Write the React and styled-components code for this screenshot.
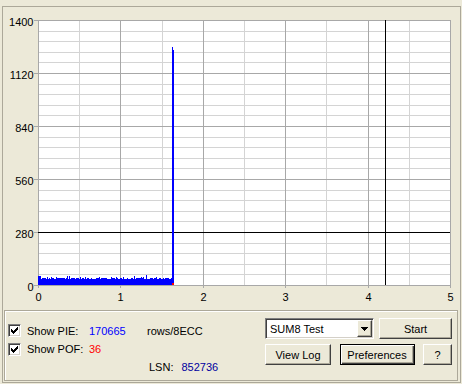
import React from "react";
import styled, { createGlobalStyle } from "styled-components";

const Global = createGlobalStyle`
  html, body { margin: 0; padding: 0; background: #ece9d8; }
  body { font-family: "Liberation Sans", Arial, sans-serif; font-size: 11px; color: #000; }
`;

const Window = styled.div`
  width: 462px;
  height: 384px;
  box-sizing: border-box;
  padding: 6px 0 0 2px;
  background: #ece9d8;
  overflow: hidden;
`;

const Frame = styled.div`
  width: 459px;
  box-sizing: border-box;
  border: 1px solid #aca899;
  padding-bottom: 1px;
  display: flex;
  flex-direction: column;
`;

const ChartSvg = styled.svg`
  display: block;
  font-family: "Liberation Sans", Arial, sans-serif;
  font-size: 11px;
`;

const Panel = styled.div`
  margin-left: 1px;
  width: 454px;
  height: 71px;
  box-sizing: border-box;
  border: 1px solid #aca899;
  box-shadow: inset 1px 1px 0 #fff;
  display: flex;
  align-items: flex-start;
  padding: 0 5px 0 3px;
`;

const Info = styled.div`
  display: grid;
  grid-template-columns: 19px 62px 58px auto;
  grid-template-rows: 19px 18px 18px;
  align-items: center;
  padding-top: 10px;
  white-space: nowrap;
`;

const CheckBox = styled.div`
  width: 13px;
  height: 13px;
  box-sizing: border-box;
  background: #fff;
  border: 1px solid;
  border-color: #808080 #fff #fff #808080;
  box-shadow: inset 1px 1px 0 #404040, inset -1px -1px 0 #d4d0c8;
  display: flex;
  align-items: center;
  justify-content: center;
`;

const Label = styled.span``;

const Value = styled.span`
  color: ${(p) => p.$color};
`;

const Lsn = styled.div`
  grid-column: 4;
  grid-row: 3;
  display: flex;
  gap: 8px;
  padding-left: 2px;
`;

const Controls = styled.div`
  margin-left: auto;
  margin-top: 7px;
  width: 187px;
  display: flex;
  flex-direction: column;
  gap: 5px;
`;

const Row = styled.div`
  display: flex;
  justify-content: space-between;
`;

const Button = styled.button`
  box-sizing: border-box;
  width: ${(p) => p.$w}px;
  height: 21px;
  margin: 0;
  padding: 0;
  font: 11px "Liberation Sans", Arial, sans-serif;
  color: #000;
  background: #ece9d8;
  border: 1px solid;
  border-color: ${(p) => (p.$default ? "#000" : "#fff #404040 #404040 #fff")};
  box-shadow: ${(p) =>
    p.$default
      ? "inset 1px 1px 0 #fff, inset -1px -1px 0 #404040, inset -2px -2px 0 #aca899"
      : "inset -1px -1px 0 #aca899"};
`;

const Select = styled.div`
  box-sizing: border-box;
  width: 109px;
  height: 21px;
  display: flex;
  align-items: stretch;
  background: #fff;
  border: 1px solid;
  border-color: #808080 #fff #fff #808080;
  box-shadow: inset 1px 1px 0 #404040, inset -1px -1px 0 #d4d0c8;
  padding: 1px 1px 1px 4px;
`;

const SelectText = styled.span`
  flex: 1;
  display: flex;
  align-items: center;
`;

const DropButton = styled.div`
  width: 15px;
  box-sizing: border-box;
  background: #ece9d8;
  border: 1px solid;
  border-color: #fff #404040 #404040 #fff;
  box-shadow: inset -1px -1px 0 #aca899;
  display: flex;
  align-items: center;
  justify-content: center;
`;

function Check() {
  const rows = [
    [[6, 1]],
    [[5, 2]],
    [[0, 1], [4, 3]],
    [[0, 2], [3, 3]],
    [[0, 5]],
    [[1, 3]],
    [[2, 1]],
  ];
  return (
    <svg width="7" height="7" shapeRendering="crispEdges">
      {rows.map((segs, y) =>
        segs.map(([x, w], i) => <rect key={y + "-" + i} x={x} y={y} width={w} height={1} fill="#000" />)
      )}
    </svg>
  );
}

function Chart() {
  const X0 = 38, X1 = 450, Y0 = 285, Y1 = 20;
  const xs = (i) => Math.round(X0 + ((X1 - X0) * i) / 5) + 0.5;
  const ys = (v) => Math.round(Y0 - ((Y0 - Y1) * v) / 1400) + 0.5;
  const minorH = [], majorH = [];
  for (let k = 1; k < 25; k++) {
    if (k % 5 === 0) majorH.push(ys(56 * k));
    else minorH.push(ys(56 * k));
  }
  const minorV = [0.5, 1.5, 2.5, 3.5, 4.5].map(xs);
  const majorV = [1, 2, 3, 4].map(xs);

  let s = 12345;
  const rnd = () => {
    s = (s * 1103515245 + 12345) & 0x7fffffff;
    return s / 0x7fffffff;
  };
  let d = `M${X0} ${Y0}`;
  for (let x = X0; x < 172; x++) {
    let h = 6 + Math.floor(rnd() * 2.4);
    if (rnd() < 0.07) h += 2;
    if (x < 41) h = 9;
    d += ` L${x} ${Y0 - h} L${x + 1} ${Y0 - h}`;
  }
  d += ` L172 ${Y0} Z`;

  const yLabels = [1400, 1120, 840, 560, 280, 0];
  return (
    <ChartSvg width="457" height="303" viewBox="3 7 457 303">
      <g shapeRendering="crispEdges">
        <rect x={X0} y={Y1} width={X1 - X0} height={Y0 - Y1} fill="#fff" />
        {minorH.map((y) => (
          <line key={"mh" + y} x1={X0} x2={X1} y1={y} y2={y} stroke="#d4d4d4" />
        ))}
        {minorV.map((x) => (
          <line key={"mv" + x} x1={x} x2={x} y1={Y1} y2={Y0} stroke="#d4d4d4" />
        ))}
        {majorH.map((y) => (
          <line key={"Mh" + y} x1={X0} x2={X1} y1={y} y2={y} stroke="#a8a8a8" />
        ))}
        {majorV.map((x) => (
          <line key={"Mv" + x} x1={x} x2={x} y1={Y1} y2={Y0} stroke="#a8a8a8" />
        ))}
        <rect x={X0 + 0.5} y={Y1 + 0.5} width={X1 - X0} height={Y0 - Y1} fill="none" stroke="#a8a8a8" />
        {yLabels.map((v) => (
          <line key={"ty" + v} x1={34} x2={X0} y1={ys(v)} y2={ys(v)} stroke="#a8a8a8" />
        ))}
        {[0, 1, 2, 3, 4, 5].map((i) => (
          <line key={"tx" + i} x1={xs(i)} x2={xs(i)} y1={Y0} y2={Y0 + 3} stroke="#a8a8a8" />
        ))}
        <line x1={X0} x2={X1} y1={ys(280)} y2={ys(280)} stroke="#000" />
        <line x1={385.5} x2={385.5} y1={Y1} y2={Y0} stroke="#000" />
        <path d={d} fill="#0000ff" />
        <rect x={172} y={47} width={1} height={Y0 - 47} fill="#0000ff" />
        <rect x={173} y={50} width={1} height={Y0 - 50} fill="#0000ff" />
        <rect x={172} y={283} width={2} height={2} fill="#ff0000" />
      </g>
      {yLabels.map((v) => (
        <text key={"ly" + v} x={33.5} y={ys(v) + 5.5} textAnchor="end" fill="#000">
          {v}
        </text>
      ))}
      {[0, 1, 2, 3, 4, 5].map((i) => (
        <text key={"lx" + i} x={xs(i)} y={301} textAnchor="middle" fill="#000">
          {i}
        </text>
      ))}
    </ChartSvg>
  );
}

export default function App() {
  return (
    <>
      <Global />
      <Window>
        <Frame>
          <Chart />
          <Panel>
            <Info>
              <CheckBox>
                <Check />
              </CheckBox>
              <Label>Show PIE:</Label>
              <Value $color="#0000ff">170665</Value>
              <Label>rows/8ECC</Label>
              <CheckBox>
                <Check />
              </CheckBox>
              <Label>Show POF:</Label>
              <Value $color="#ff0000">36</Value>
              <span />
              <Lsn>
                <Label>LSN:</Label>
                <Value $color="#0000a0">852736</Value>
              </Lsn>
            </Info>
            <Controls>
              <Row>
                <Select>
                  <SelectText>SUM8 Test</SelectText>
                  <DropButton>
                    <svg width="7" height="4" shapeRendering="crispEdges">
                      <polygon points="0,0 7,0 3.5,4" fill="#000" />
                    </svg>
                  </DropButton>
                </Select>
                <Button $w={73}>Start</Button>
              </Row>
              <Row>
                <Button $w={66}>View Log</Button>
                <Button $w={75} $default>
                  Preferences
                </Button>
                <Button $w={29}>?</Button>
              </Row>
            </Controls>
          </Panel>
        </Frame>
      </Window>
    </>
  );
}
